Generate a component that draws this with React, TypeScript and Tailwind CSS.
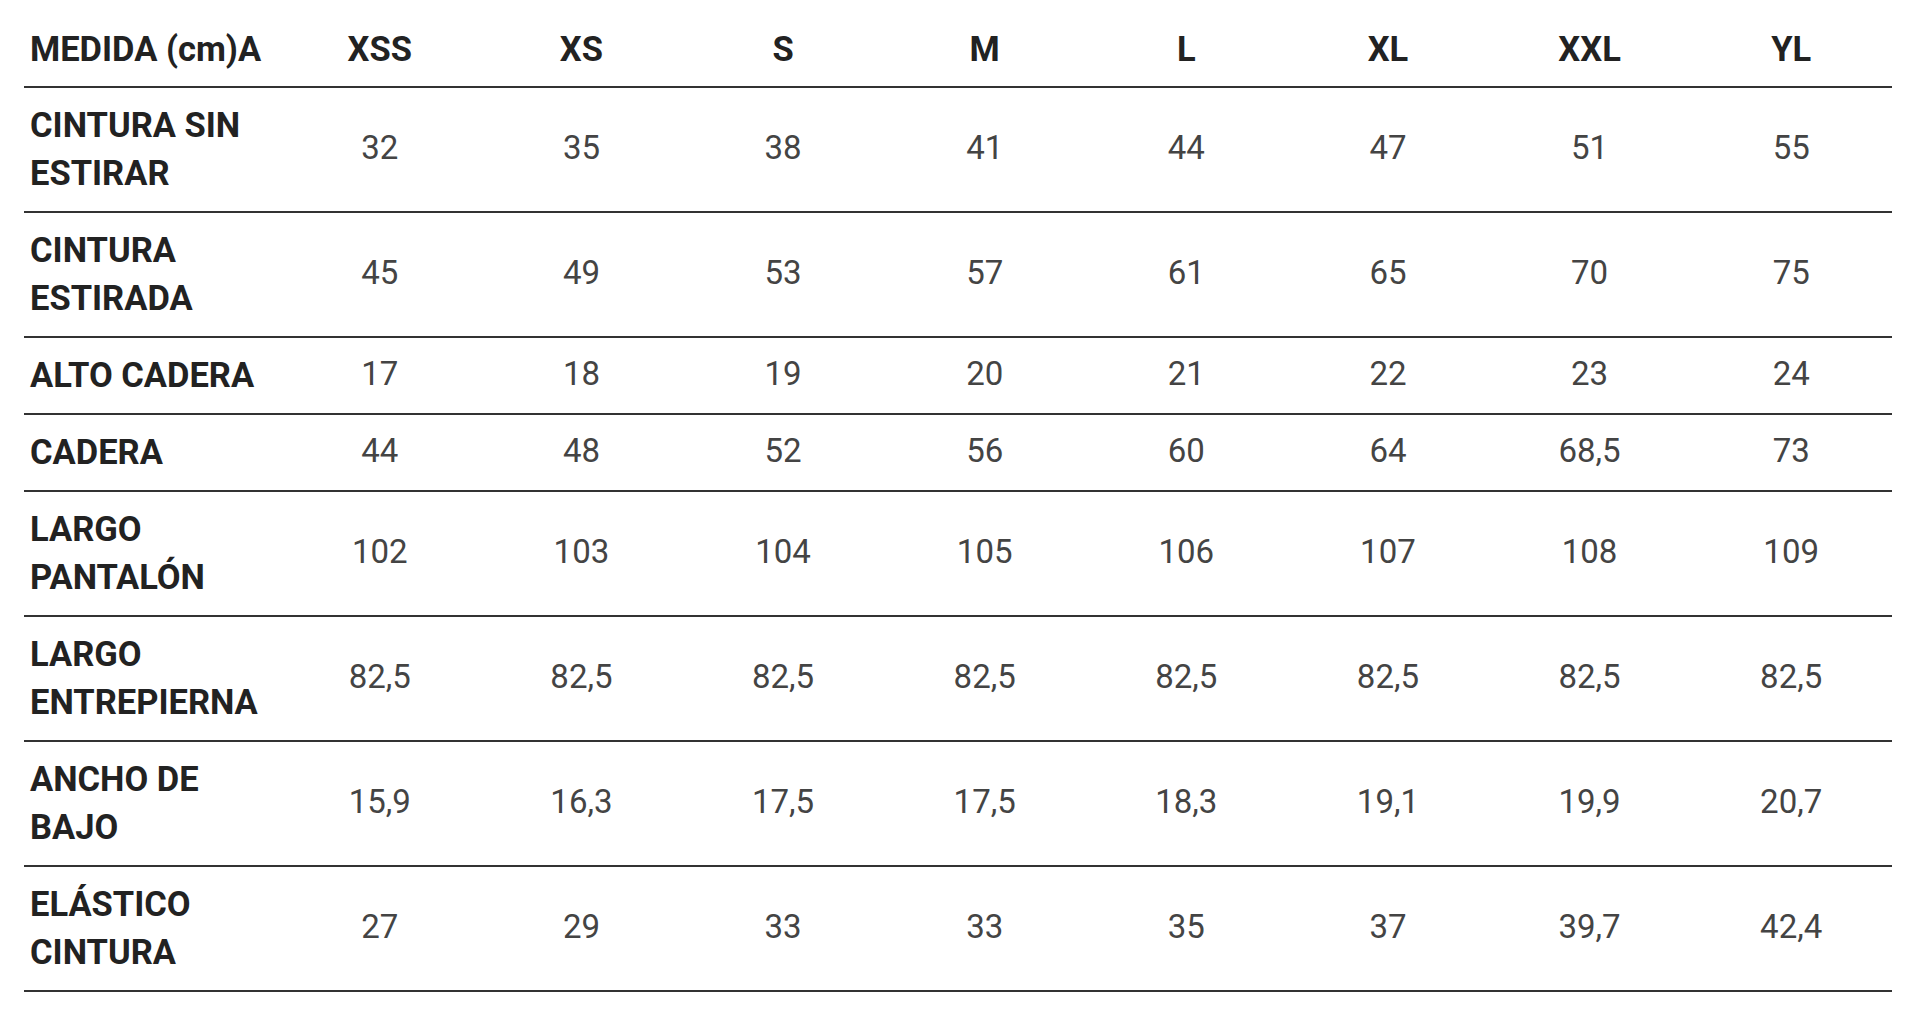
import React from "react";

const sizes = ["XSS", "XS", "S", "M", "L", "XL", "XXL", "YL"];

const rows: { label: string[]; values: string[] }[] = [
  { label: ["CINTURA SIN", "ESTIRAR"], values: ["32", "35", "38", "41", "44", "47", "51", "55"] },
  { label: ["CINTURA", "ESTIRADA"], values: ["45", "49", "53", "57", "61", "65", "70", "75"] },
  { label: ["ALTO CADERA"], values: ["17", "18", "19", "20", "21", "22", "23", "24"] },
  { label: ["CADERA"], values: ["44", "48", "52", "56", "60", "64", "68,5", "73"] },
  { label: ["LARGO", "PANTALÓN"], values: ["102", "103", "104", "105", "106", "107", "108", "109"] },
  { label: ["LARGO", "ENTREPIERNA"], values: ["82,5", "82,5", "82,5", "82,5", "82,5", "82,5", "82,5", "82,5"] },
  { label: ["ANCHO DE", "BAJO"], values: ["15,9", "16,3", "17,5", "17,5", "18,3", "19,1", "19,9", "20,7"] },
  { label: ["ELÁSTICO", "CINTURA"], values: ["27", "29", "33", "33", "35", "37", "39,7", "42,4"] },
];

export default function App() {
  return (
    <div
      className="min-h-[1029px] w-[1920px] bg-white pl-[24px]"
      style={{ fontFamily: "Roboto, 'Liberation Sans', sans-serif" }}
    >
      <div className="w-[1868px]">
        <div className="grid grid-cols-[255px_repeat(8,1fr)] border-b-2 border-[#333333] pt-[25px] pb-[13px] text-[34.5px] leading-[48px] font-bold text-[#222222]">
          <div className="pl-[6px] whitespace-nowrap">MEDIDA (cm)A</div>
          {sizes.map((s) => (
            <div key={s} className="text-center">
              {s}
            </div>
          ))}
        </div>
        {rows.map((r, i) => (
          <div
            key={i}
            className="grid grid-cols-[255px_repeat(8,1fr)] items-center border-b-2 border-[#333333] pt-[13px] pb-[14px] leading-[48px]"
          >
            <div className="pl-[6px] text-[34.5px] font-bold text-[#222222]">
              {r.label.map((l, j) => (
                <div key={j} className="whitespace-nowrap">
                  {l}
                </div>
              ))}
            </div>
            {r.values.map((v, j) => (
              <div key={j} className="-mt-[2px] text-center text-[33px] text-[#444444]">
                {v}
              </div>
            ))}
          </div>
        ))}
      </div>
    </div>
  );
}
